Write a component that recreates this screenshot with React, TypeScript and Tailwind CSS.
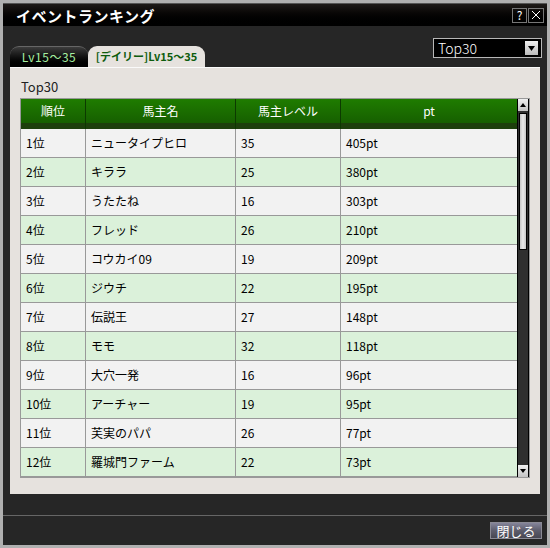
import React from 'react';

const rows = [
  ['1位', 'ニュータイプヒロ', '35', '405pt'],
  ['2位', 'キララ', '25', '380pt'],
  ['3位', 'うたたね', '16', '303pt'],
  ['4位', 'フレッド', '26', '210pt'],
  ['5位', 'コウカイ09', '19', '209pt'],
  ['6位', 'ジウチ', '22', '195pt'],
  ['7位', '伝説王', '27', '148pt'],
  ['8位', 'モモ', '32', '118pt'],
  ['9位', '大穴一発', '16', '96pt'],
  ['10位', 'アーチャー', '19', '95pt'],
  ['11位', '芙実のパパ', '26', '77pt'],
  ['12位', '羅城門ファーム', '22', '73pt'],
];

const font = { fontFamily: '"Noto Sans CJK JP", "DejaVu Sans", sans-serif' };

export default function App() {
  return (
    <div className="w-[550px] h-[548px] bg-[#b0b0b0] p-[3px]" style={font}>
      <div className="w-full h-full bg-[#262626] flex flex-col">
        {/* Title bar */}
        <div className="h-[23px] shrink-0 flex items-center justify-between border-t border-[#555] bg-gradient-to-b from-[#1e1a18] to-[#000] pl-[13px] pr-[3px]">
          <span className="text-white font-bold text-[15px] leading-none tracking-[0.5px]">イベントランキング</span>
          <div className="flex gap-px">
            <div className="w-[15px] h-[15px] border border-[#777] flex items-center justify-center text-white text-[12px] leading-none">?</div>
            <div className="w-[16px] h-[15px] border border-[#777] flex items-center justify-center">
              <svg width="10" height="10" viewBox="0 0 10 10">
                <path d="M1 1L9 9M9 1L1 9" stroke="#fff" strokeWidth="1" />
              </svg>
            </div>
          </div>
        </div>

        {/* Tabs + dropdown */}
        <div className="h-[41px] shrink-0 flex justify-between pl-[7px] pr-[5px]">
          <div className="flex items-end">
            <div className="w-[78px] h-[21px] rounded-t-[9px] border-t border-[#666] bg-gradient-to-b from-[#3c3c3c] to-[#000] flex items-center justify-center text-[12px] text-[#a6f0a0] leading-none tracking-[0.5px]">
              Lv15～35
            </div>
            <div className="w-[117px] h-[21px] rounded-t-[9px] bg-[#e6e2de] flex items-center justify-center text-[11px] font-bold text-[#0d5c0d] leading-none">
              [デイリー]Lv15～35
            </div>
          </div>
          <div className="mt-[12px] w-[109px] h-[20px] border border-[#b8b8b8] bg-black flex items-center justify-between pl-[4px] pr-[3px]">
            <span className="text-white text-[14px] font-light leading-none">Top30</span>
            <div className="w-[13px] h-[14px] bg-gradient-to-b from-[#f0f0f0] to-[#bcbcbc] flex items-center justify-center">
              <svg width="7" height="5" viewBox="0 0 7 5">
                <path d="M0 0H7L3.5 5Z" fill="#000" />
              </svg>
            </div>
          </div>
        </div>

        {/* Panel */}
        <div className="mx-[7px] h-[427px] shrink-0 bg-[#e6e2de] border-t border-[#fafafa] pl-[10px] pr-[10px] flex flex-col">
          <div className="h-[30px] flex items-center text-[13px] text-[#222] leading-none pt-[7px] pl-[1px]">Top30</div>
          <div className="flex border border-[#999] bg-[#999]">
            <div className="flex flex-col w-[496px]">
              <div className="grid grid-cols-[65px_150px_105px_176px] h-[30px] bg-gradient-to-b from-[#1f7c00] to-[#145800] text-white text-[12px]">
                {['順位', '馬主名', '馬主レベル', 'pt'].map((h, i) => (
                  <div key={h} className={`flex flex-col ${i < 3 ? 'border-r border-[#0c3a00]' : ''}`}>
                    <div className="flex-1 flex items-center justify-center leading-none">{h}</div>
                    <div className="h-[6px] bg-[#1d3f0c]" />
                  </div>
                ))}
              </div>
              {rows.map((r, idx) => (
                <div
                  key={r[0]}
                  className={`grid grid-cols-[65px_150px_105px_176px] h-[29px] border-b border-[#999] text-[12px] text-black ${idx % 2 === 0 ? 'bg-[#f2f2f2]' : 'bg-[#dbf1da]'}`}
                >
                  {r.map((c, i) => (
                    <div key={i} className={`flex items-center pl-[5px] leading-none ${i < 3 ? 'border-r border-[#999]' : ''}`}>
                      {c}
                    </div>
                  ))}
                </div>
              ))}
            </div>
            {/* Scrollbar */}
            <div className="w-[13px] bg-[#2f2f2f] border-x border-black flex flex-col justify-between">
              <div className="flex flex-col gap-[2px]">
                <div className="h-[12px] bg-gradient-to-b from-[#f0f0f0] to-[#c4c4c4] flex items-center justify-center">
                  <svg width="6" height="4" viewBox="0 0 6 4">
                    <path d="M0 4H6L3 0Z" fill="#000" />
                  </svg>
                </div>
                <div className="mx-[1px] h-[137px] border border-black bg-gradient-to-r from-[#c4c4c4] via-[#e8e8e8] to-[#c4c4c4]" />
              </div>
              <div className="h-[12px] bg-gradient-to-b from-[#f0f0f0] to-[#c4c4c4] flex items-center justify-center">
                <svg width="6" height="4" viewBox="0 0 6 4">
                  <path d="M0 0H6L3 4Z" fill="#000" />
                </svg>
              </div>
            </div>
          </div>
        </div>

        {/* Footer */}
        <div className="mt-[21px] border-t border-[#666] flex-1 flex justify-end items-start pt-[6px] pr-[5px]">
          <div className="w-[52px] h-[17px] border border-[#8a8a94] bg-gradient-to-b from-[#85859a] via-[#5d5d6c] to-[#474752] flex items-center justify-center text-white text-[13px] leading-none">
            閉じる
          </div>
        </div>
      </div>
    </div>
  );
}
